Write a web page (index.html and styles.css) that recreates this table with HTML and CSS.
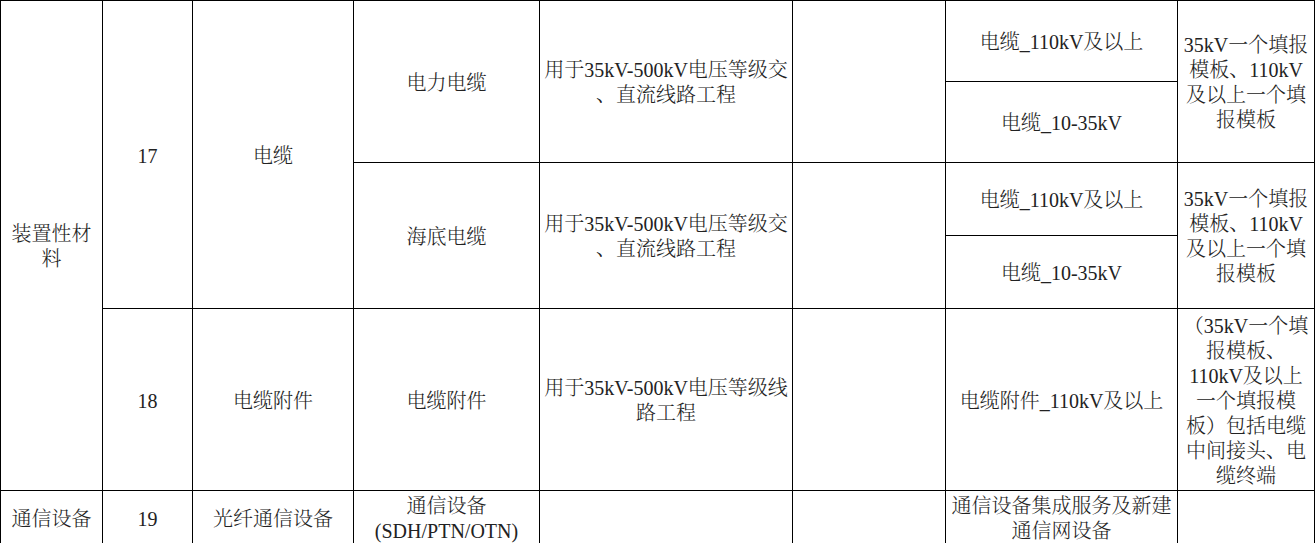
FILE: index.html
```html
<!DOCTYPE html>
<html lang="zh-CN">
<head>
<meta charset="utf-8">
<title>装置性材料</title>
<link rel="stylesheet" href="styles.css">
</head>
<body>
<table class="grid">
  <colgroup>
    <col class="c1"><col class="c2"><col class="c3"><col class="c4">
    <col class="c5"><col class="c6"><col class="c7"><col class="c8">
  </colgroup>
  <tbody>
    <tr class="r1">
      <td rowspan="5">装置性材<br>料</td>
      <td rowspan="4">17</td>
      <td rowspan="4">电缆</td>
      <td rowspan="2">电力电缆</td>
      <td rowspan="2">用于35kV-500kV电压等级交<br>、直流线路工程</td>
      <td rowspan="2"></td>
      <td>电缆_110kV及以上</td>
      <td rowspan="2">35kV一个填报<br>模板、110kV<br>及以上一个填<br>报模板</td>
    </tr>
    <tr class="r2">
      <td>电缆_10-35kV</td>
    </tr>
    <tr class="r3">
      <td rowspan="2">海底电缆</td>
      <td rowspan="2">用于35kV-500kV电压等级交<br>、直流线路工程</td>
      <td rowspan="2"></td>
      <td>电缆_110kV及以上</td>
      <td rowspan="2">35kV一个填报<br>模板、110kV<br>及以上一个填<br>报模板</td>
    </tr>
    <tr class="r4">
      <td>电缆_10-35kV</td>
    </tr>
    <tr class="r5">
      <td>18</td>
      <td>电缆附件</td>
      <td>电缆附件</td>
      <td>用于35kV-500kV电压等级线<br>路工程</td>
      <td></td>
      <td>电缆附件_110kV及以上</td>
      <td>（35kV一个填<br>报模板、<br>110kV及以上<br>一个填报模<br>板）包括电缆<br>中间接头、电<br>缆终端</td>
    </tr>
    <tr class="r6">
      <td>通信设备</td>
      <td>19</td>
      <td>光纤通信设备</td>
      <td>通信设备<br>(SDH/PTN/OTN)</td>
      <td></td>
      <td></td>
      <td>通信设备集成服务及新建<br>通信网设备</td>
      <td></td>
    </tr>
  </tbody>
</table>
</body>
</html>
```

FILE: styles.css
```css
html, body {
  margin: 0;
  padding: 0;
  background: #ffffff;
}

.grid {
  border-collapse: collapse;
  table-layout: fixed;
  width: 1314px;
  font-family: "Liberation Serif", "Noto Serif CJK SC", "Noto Sans CJK SC", serif;
  font-size: 20px;
  font-weight: 300;
  line-height: 25px;
  color: #222222;
}

.grid td {
  border: 1px solid #000000;
  padding: 3px 0 0 0;
  text-align: center;
  vertical-align: middle;
  white-space: nowrap;
  overflow: hidden;
}

.c1 { width: 102px; }
.c2 { width: 90px; }
.c3 { width: 161px; }
.c4 { width: 186px; }
.c5 { width: 253px; }
.c6 { width: 153px; }
.c7 { width: 232px; }
.c8 { width: 137px; }

.r1 { height: 81px; }
.r2 { height: 81px; }
.r3 { height: 73px; }
.r4 { height: 73px; }
.r5 { height: 182px; }
.r6 { height: 51px; }
```
